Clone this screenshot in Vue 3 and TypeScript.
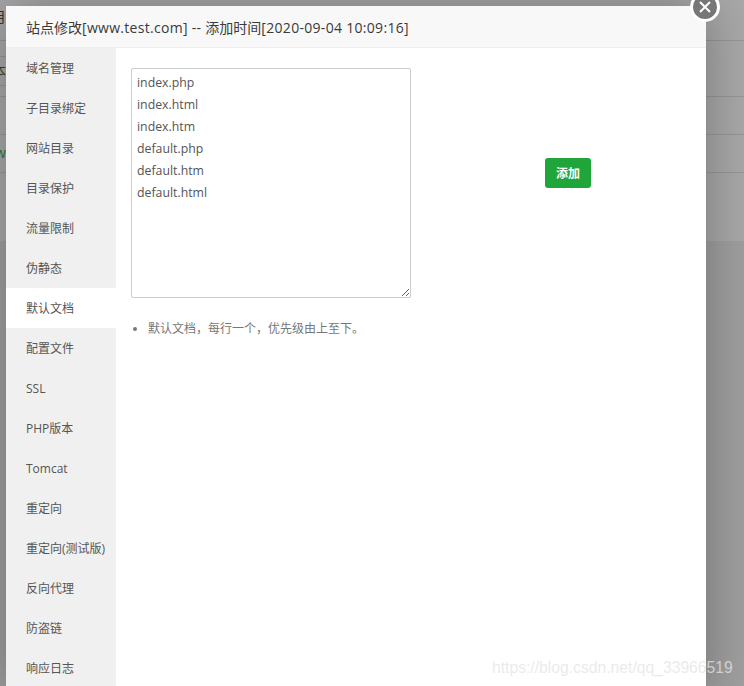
<script setup lang="ts">
const menu: string[] = ['域名管理','子目录绑定','网站目录','目录保护','流量限制','伪静态','默认文档','配置文件','SSL','PHP版本','Tomcat','重定向','重定向(测试版)','反向代理','防盗链','响应日志']
const activeItem = '默认文档'
const docs = 'index.php\nindex.html\nindex.htm\ndefault.php\ndefault.htm\ndefault.html'
</script>

<template>
  <div class="page">
    <div class="backdrop">
      <div class="bg-row r1"><span class="bg-t">月</span></div>
      <div class="bg-row r2"><div class="bg-box"><span class="bg-t t2">本</span></div></div>
      <div class="bg-row r3"></div>
      <div class="bg-row r4"><span class="bg-t green">w</span></div>
      <div class="bg-row r5"></div>
      <div class="bg-foot"></div>
    </div>

    <section class="modal">
      <header class="title">站点修改<span class="latin">[www.test.com] -- </span>添加时间<span class="latin">[2020-09-04 10:09:16]</span></header>
      <div class="body">
        <nav class="side">
          <div v-for="m in menu" :key="m" class="item" :class="{ active: m === activeItem }">{{ m }}</div>
        </nav>
        <main class="content">
          <div class="editor">
            <textarea class="docs" :value="docs" spellcheck="false"></textarea>
            <button class="add" type="button">添加</button>
          </div>
          <ul class="help">
            <li>默认文档，每行一个，优先级由上至下。</li>
          </ul>
        </main>
      </div>
    </section>

    <div class="close" aria-label="close">
      <svg width="12" height="12" viewBox="0 0 12 12"><path d="M1 1 L11 11 M11 1 L1 11" stroke="#fff" stroke-width="2" fill="none" /></svg>
    </div>

    <div class="mark">https://blog.csdn.net/qq_33966519</div>
  </div>
</template>

<style>
html, body { margin: 0; padding: 0; background: #a6a6a6; }
</style>

<style scoped>
.page {
  position: relative;
  width: 744px;
  height: 686px;
  overflow: hidden;
  background: #a8a8a8;
  font-family: "Open Sans", "Noto Sans CJK SC", sans-serif;
}
.backdrop { display: flex; flex-direction: column; height: 100%; }
.bg-row { box-sizing: border-box; border-bottom: 1px solid #959595; position: relative; }
.r1 { height: 41px; }
.r2 { height: 56px; padding-top: 15px; }
.r3 { height: 38px; }
.r4 { height: 38px; }
.r5 { height: 68px; border-bottom: 0; }
.bg-foot { flex: 1; background: #9f9f9f; }
.bg-box {
  position: relative;
  box-sizing: border-box;
  width: 20px;
  height: 30px;
  border-top: 1px solid #959595;
  border-bottom: 1px solid #959595;
}
.bg-t { position: absolute; font-size: 14px; line-height: 18px; color: #333; white-space: nowrap; }
.r1 .bg-t { top: 8px; left: -8px; }
.bg-box .t2 { top: 5px; left: -8px; color: #4a3a20; }
.r4 .green { top: 9px; left: -5px; color: #2b7a3a; }

.modal {
  position: absolute;
  left: 6px;
  top: 6px;
  width: 700px;
  height: 690px;
  background: #fff;
  box-shadow: 0 0 50px rgba(0, 0, 0, 0.3);
  display: flex;
  flex-direction: column;
}
.title {
  box-sizing: border-box;
  height: 42px;
  flex: none;
  padding-left: 20px;
  line-height: 43px;
  font-size: 14px;
  color: #3a3a3a;
  background: #f8f8f8;
  border-bottom: 1px solid #eee;
}
.latin { letter-spacing: 0.3px; white-space: pre; }
.body { display: flex; flex: 1; min-height: 0; }
.side { width: 110px; flex: none; background: #f0f0f0; }
.item {
  height: 40px;
  line-height: 42px;
  padding-left: 20px;
  font-size: 12px;
  color: #555;
}
.item.active { background: #fff; }
.content { flex: 1; padding: 20px 15px; }
.editor { display: flex; align-items: flex-start; }
.docs {
  box-sizing: border-box;
  display: block;
  width: 280px;
  height: 230px;
  margin: 0;
  padding: 3px 5px;
  border: 1px solid #ccc;
  border-radius: 2px;
  outline: 0;
  font-family: inherit;
  font-size: 12.3px;
  line-height: 22px;
  color: #555;
  background: #fff;
}
.add {
  box-sizing: border-box;
  width: 46px;
  height: 30px;
  margin: 90px 0 0 134px;
  padding: 0;
  border: 0;
  border-radius: 3px;
  background: #20a53a;
  color: #fff;
  font-family: inherit;
  font-size: 12px;
  font-weight: 700;
}
.help {
  margin: 23px 0 0;
  padding: 0 0 0 17px;
  font-size: 12px;
  line-height: 16px;
  color: #777;
}
.close {
  position: absolute;
  left: 690px;
  top: -8px;
  box-sizing: border-box;
  width: 30px;
  height: 30px;
  border: 3px solid #fff;
  border-radius: 50%;
  background: #777;
  display: flex;
  align-items: center;
  justify-content: center;
}
.mark {
  position: absolute;
  left: 492px;
  top: 658px;
  font-family: "Liberation Sans", sans-serif;
  font-size: 15.7px;
  line-height: 20px;
  color: rgba(228, 228, 228, 0.75);
  white-space: nowrap;
}
</style>
